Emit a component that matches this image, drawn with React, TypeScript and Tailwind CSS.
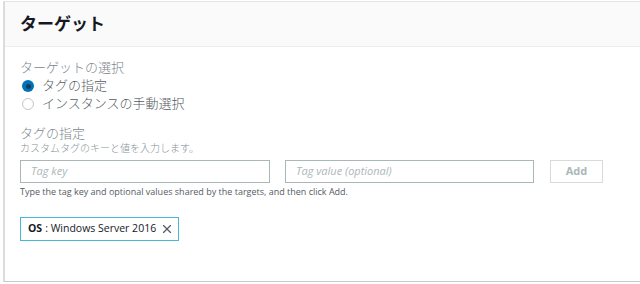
import { X } from 'lucide-react';

const font = "font-['Open_Sans','Noto_Sans_CJK_JP',sans-serif]";

export default function App() {
  return (
    <div className={`w-[640px] h-[284px] bg-white ${font} pt-[1px] pr-0`}>
      <div className="h-[281px] border-t border-l-2 border-b border-[#e4e4e4] border-l-[#dcdcdc] border-b-[#c8c8c8] ml-[3px] flex flex-col">
        <div className="h-[45px] bg-[#fafafa] border-b border-[#eaeded] flex items-center px-[15px]">
          <h2 className="text-[17px] font-bold text-[#16191f]">ターゲット</h2>
        </div>
        <div className="px-[15px] pt-[11px]">
          <p className="text-[13px] font-light text-[#7d868c] leading-[18px]">ターゲットの選択</p>
          <div className="mt-[1px] flex items-center gap-[8px] h-[18px]">
            <span className="w-[12px] h-[12px] rounded-full bg-[#0073bb] flex items-center justify-center ml-[2px]">
              <span className="w-[5px] h-[5px] rounded-full bg-[#1b3a57]" />
            </span>
            <span className="text-[13px] font-light text-[#545b64]">タグの指定</span>
          </div>
          <div className="flex items-center gap-[8px] h-[18px]">
            <span className="w-[12px] h-[12px] rounded-full border border-[#c6c6c6] bg-white ml-[2px]" />
            <span className="text-[13px] font-light text-[#545b64]">インスタンスの手動選択</span>
          </div>
          <p className="mt-[12px] text-[13px] font-light text-[#7d868c] leading-[16px]">タグの指定</p>
          <p className="text-[10px] font-light text-[#879196] leading-[14px]">カスタムタグのキーと値を入力します。</p>
          <div className="mt-[5px] flex items-center">
            <div className="w-[250px] h-[23px] border border-[#aab7b8] flex items-center px-[10px] text-[11px] italic text-[#aab7b8]">Tag key</div>
            <div className="ml-[15px] w-[249px] h-[23px] border border-[#aab7b8] flex items-center px-[10px] text-[11px] italic text-[#aab7b8]">Tag value (optional)</div>
            <div className="ml-[16px] w-[53px] h-[23px] border border-[#d5dbdb] flex items-center justify-center text-[11px] font-bold text-[#aab7b8]">Add</div>
          </div>
          <p className="mt-[1px] text-[9px] text-[#545b64] leading-[16px]">Type the tag key and optional values shared by the targets, and then click Add.</p>
          <div className="mt-[17px] inline-flex items-center h-[24px] border border-[#44b9d6] pl-[7px] pr-[4px] text-[10.5px] text-[#16191f]">
            <span className="font-bold">OS</span>
            <span className="ml-[3px]">: Windows Server 2016</span>
            <X className="ml-[4px] w-[14px] h-[14px] text-[#545b64]" strokeWidth={2} />
          </div>
        </div>
      </div>
    </div>
  );
}
